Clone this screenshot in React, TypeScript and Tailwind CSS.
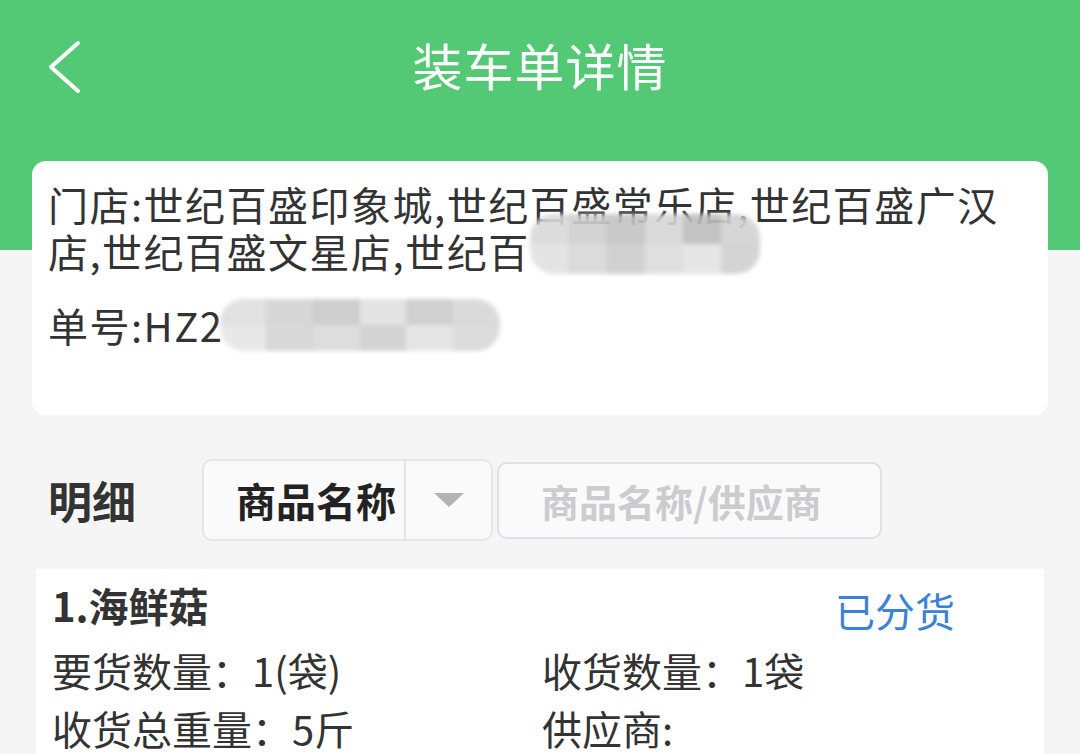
import React from 'react';

const FONT = { fontFamily: '"Noto Sans CJK SC", "Noto Sans", sans-serif' };

const MOSAIC_A = ['#d9d9d9', '#cfcfcf', '#c4c4c4', '#d6d6d6', '#bdbdbd', '#d2d2d2', '#e2e2e2', '#d8d8d8', '#cdcdcd', '#dcdcdc', '#e4e4e4', '#d0d0d0'];
const MOSAIC_B = ['#dedede', '#d3d3d3', '#c9c9c9', '#e0e0e0', '#cbcbcb', '#d7d7d7', '#e6e6e6', '#d4d4d4', '#dadada', '#cfcfcf', '#e3e3e3', '#d8d8d8'];

const Blob = ({ cells, className }: { cells: string[]; className: string }) => (
    <span className={`inline-grid grid-cols-6 align-middle overflow-hidden rounded-[24px] blur-[2px] opacity-90 ${className}`}>
        {cells.map((c, i) => (
            <span key={i} style={{ backgroundColor: c }} />
        ))}
    </span>
);

export default function App() {
    return (
        <div
            className="w-[1080px] h-[754px] overflow-hidden bg-[linear-gradient(to_bottom,#54c975_250px,#f5f5f5_250px)] text-[#333]"
            style={FONT}
        >
            {/* Title bar */}
            <div className="relative h-[128px] flex items-center justify-center">
                <svg className="absolute left-[44px] top-[40px]" width="40" height="54" viewBox="0 0 40 54" fill="none">
                    <polyline points="34,3 7,27 34,51" stroke="white" strokeWidth="4" strokeLinecap="round" strokeLinejoin="round" />
                </svg>
                <h1 className="text-[50px] leading-none text-white tracking-[1px]">装车单详情</h1>
            </div>

            {/* Order card */}
            <div className="mx-[32px] mt-[33px] h-[254px] rounded-[14px] bg-white px-[16px] pt-[20px] text-[40px] leading-[47px] tracking-[1.5px]">
                <p>
                    门店:世纪百盛印象城,世纪百盛常乐店,世纪百盛广汉店,世纪百盛文星店,世纪百
                    <Blob cells={MOSAIC_A} className="w-[230px] h-[60px] -mt-[26px] grid-rows-2" />
                </p>
                <p className="mt-[24px] flex items-center">
                    单号:HZ2
                    <Blob cells={MOSAIC_B} className="w-[280px] h-[52px] grid-rows-2 ml-[-4px]" />
                </p>
            </div>

            {/* Filter row */}
            <div className="mt-[44px] flex items-center pl-[48px]">
                <span className="text-[44px] font-bold w-[154px]">明细</span>
                <div className="flex items-center h-[82px] w-[291px] rounded-[10px] border-2 border-[#e6e6e6] bg-[#fafafa]">
                    <span className="pl-[32px] w-[200px] text-[40px] font-bold text-[#222]">商品名称</span>
                    <span className="h-full w-[2px] bg-[#e3e3e3]" />
                    <svg className="ml-[28px]" width="30" height="14" viewBox="0 0 30 14">
                        <polygon points="0,0 30,0 15,14" fill="#b3b3b3" />
                    </svg>
                </div>
                <div className="ml-[4px] flex items-center h-[77px] w-[385px] rounded-[10px] border-2 border-[#e0e0e4] bg-[#fafafa] pl-[42px]">
                    <span className="text-[38px] font-bold text-[#cbcbd0]">商品名称/供应商</span>
                </div>
            </div>

            {/* Item card */}
            <div className="mx-[36px] mt-[28px] bg-white px-[16px] pt-[2px] text-[40px] leading-[58px]">
                <div className="flex items-center justify-between pr-[73px]">
                    <span className="text-[40px] font-bold leading-[52px]">1.海鲜菇</span>
                    <span className="text-[40px] text-[#3a82d8] mt-[10px]">已分货</span>
                </div>
                <div className="grid grid-cols-2 mt-[2px]">
                    <span>要货数量：1(袋)</span>
                    <span className="pl-[2px]">收货数量：1袋</span>
                    <span>收货总重量：5斤</span>
                    <span className="pl-[2px]">供应商:</span>
                </div>
            </div>
        </div>
    );
}
